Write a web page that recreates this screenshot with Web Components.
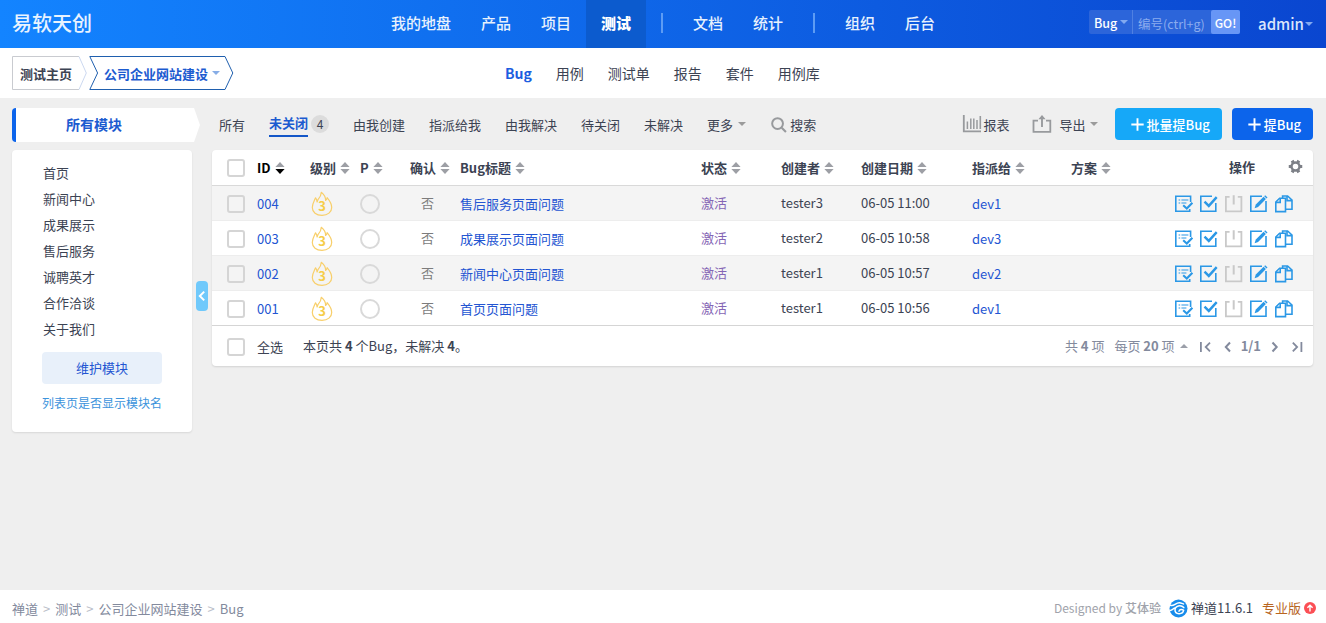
<!DOCTYPE html>
<html lang="zh-CN">
<head>
<meta charset="utf-8">
<title>Bug</title>
<style>
  body {
    margin: 0;
    height: 623px;
    display: flex;
    flex-direction: column;
    background: #efefef;
    color: #3c4353;
    font: 13px/20px "Noto Sans CJK SC", sans-serif;
    overflow: hidden;
  }

  main {
    flex: 1;
    display: flex;
    align-items: flex-start;
    padding: 10px 13px 0 12px;
  }
</style>
</head>
<body>
<top-bar></top-bar>
<sub-bar></sub-bar>
<main>
  <module-side>
    <span>首页</span>
    <span>新闻中心</span>
    <span>成果展示</span>
    <span>售后服务</span>
    <span>诚聘英才</span>
    <span>合作洽谈</span>
    <span>关于我们</span>
  </module-side>
  <side-toggle></side-toggle>
  <bug-panel></bug-panel>
</main>
<page-footer></page-footer>

<script>
const define = (name, html, setup) => {
  const template = document.createElement('template');
  template.innerHTML = html;
  customElements.define(name, class extends HTMLElement {
    constructor() {
      super();
      this.attachShadow({ mode: 'open' });
      this.shadowRoot.appendChild(template.content.cloneNode(true));
    }

    connectedCallback() {
      if (setup) setup(this, this.shadowRoot);
    }
  });
};

// Stroke icons on a 20x20 grid
const icons = {
  confirm: '<path d="M16.600 8V2.300H1.800V17.300H15.700V15"/><path d="M4.600 6h1.600M7.400 6h7M4.600 9h1.600M7.400 9h5" stroke-width="1.200"/><path d="M9.200 11.300l3.600 3.300 5.600-5.800" stroke-width="2.100"/>',
  resolve: '<path d="M13 2.300H1.800V17.300H16.800V9"/><path d="M5.500 7.600l4.300 4.300 7.900-8.800" stroke-width="2.400"/>',
  close: '<path d="M5.600 2.800H1.900V17.400H17.400V2.800H13.800" stroke-width="1.800"/><path d="M9.700 1.200V10.500" stroke-width="2"/>',
  edit: '<path d="M13 2.300H1.800V17.300H17V7"/><path d="M5.600 14.200l1.200-3.600 7.800-7.800 2.300 2.300-7.800 7.800z" fill="currentColor" stroke="none"/><path d="M16.200 1.200l2.300 2.300-1 1.100-2.300-2.300z" fill="currentColor" stroke="none"/>',
  copy: '<path d="M1.800 8L5.600 4.300H11.500V17.600H1.800z"/><path d="M2 8.400h4.200V4.400"/><path d="M8.600 4V2H13.600l4.400 4V15.200h-6.200M13 2.400v4.200h4.600"/>',
  search: '<circle cx="8.400" cy="8.400" r="6" stroke-width="2.200"/><path d="M13 13l4.700 4.700" stroke-width="2.400"/>',
  chart: '<path d="M1.800 1V17.400H19" stroke-width="1.800"/><path d="M5.400 7.500v7.500M8.800 4.400v10.600M11.800 4.400v10.600M15 6v9" stroke-width="1.500"/><path d="M18.300 2v13" stroke-width="1.600"/>',
  share: '<path d="M6 6.600H1.500V17.800H18.300V6.600H14" stroke-width="1.800"/><path d="M10 2.200V13" stroke-width="1.900"/><path d="M6.400 5.200L10 1l3.600 4.200z" fill="currentColor" stroke="none"/>',
  plus: '<path d="M10 3.500v13M3.500 10h13" stroke-width="2"/>',
  left: '<path d="M12 5.500L7.800 10l4.200 4.500" stroke-width="2"/>',
  right: '<path d="M8.500 5.500L12.700 10l-4.200 4.500" stroke-width="2"/>',
  first: '<path d="M5.900 5v10M15 5.700L10.700 10l4.300 4.300" stroke-width="1.800"/>',
  last: '<path d="M14.400 5v10M5.800 5.700l4.300 4.300-4.300 4.300" stroke-width="1.800"/>',
  gear: '<circle cx="10" cy="10" r="5.300" stroke-width="3.200"/><path d="M16 10h3M13 15.200l1.500 2.600M7 15.200l-1.500 2.600M4 10H1M7 4.800L5.500 2.200M13 4.800l1.500-2.600" stroke-width="4.200"/>'
};

define('zt-icon', `
  <style>
    :host { display: inline-flex; flex: none; width: 20px; height: 20px; }
    svg { width: 100%; height: 100%; fill: none; stroke: currentColor; stroke-width: 1.6; }
  </style>
  <svg viewBox="0 0 20 20"></svg>
`, (el, root) => {
  root.querySelector('svg').innerHTML = icons[el.getAttribute('name')];
});

define('zt-caret', `
  <style>
    :host {
      display: inline-block;
      flex: none;
      border: 4px solid transparent;
      border-top-color: currentColor;
      border-bottom: 0;
    }
    :host([up]) { border-top: 0; border-bottom: 4px solid currentColor; }
  </style>
`);

define('zt-check', `
  <style>
    :host {
      display: block;
      box-sizing: border-box;
      width: 18px;
      height: 18px;
      border: 2px solid #d5d5d5;
      border-radius: 3px;
    }
  </style>
`);

define('nav-item', `
  <style>
    :host { display: block; padding: 0 15px; font-weight: 500; color: #e7f1fd; }
    :host([active]) { background: #0c5bce; color: #fff; font-weight: 900; }
  </style>
  <slot></slot>
`);

define('top-bar', `
  <style>
    :host {
      display: flex;
      height: 48px;
      flex: none;
      background: linear-gradient(90deg, #1384ff 0%, #0a46d0 100%);
      color: #fff;
      line-height: 46px;
      justify-content: space-between;
    }
    .brand { width: 364px; padding-left: 12px; font-size: 20px; font-weight: 500; color: #e9f3ff; }
    nav { display: flex; font-size: 15px; }
    nav-item { height: 48px; }
    i { width: 2px; height: 20px; margin: 13px 15px; background: #5d9cf4; }
    .tools { flex: 1; display: flex; justify-content: flex-end; padding-right: 13px; }
    .search { display: flex; height: 24px; margin-top: 10px; line-height: 25px; border-radius: 2px; background: #2c65da; }
    .search > * { box-sizing: border-box; }
    .type { display: flex; align-items: center; justify-content: space-between; width: 44px; padding: 0 4px 0 5px; border-right: 1px solid #4f80e2; font-size: 12.5px; font-weight: 500; }
    .type zt-caret, .user zt-caret { color: #82a9f0; }
    .input { width: 78px; padding-left: 5px; color: #8bacee; font-size: 12.5px; line-height: 27px; white-space: nowrap; }
    .go { width: 29px; text-align: center; background: #6796f6; border-radius: 2px; font-size: 12px; font-weight: 500; line-height: 26px; }
    .user { display: flex; align-items: center; justify-content: space-between; width: 55px; margin-left: 18px; font-size: 15px; color: #dbe6fb; height: 48px; line-height: 48px; font-weight: 500; }
  </style>
  <div class="brand">易软天创</div>
  <nav>
    <nav-item>我的地盘</nav-item>
    <nav-item>产品</nav-item>
    <nav-item>项目</nav-item>
    <nav-item active>测试</nav-item>
    <i></i>
    <nav-item>文档</nav-item>
    <nav-item>统计</nav-item>
    <i></i>
    <nav-item>组织</nav-item>
    <nav-item>后台</nav-item>
  </nav>
  <div class="tools">
    <div class="search">
      <div class="type">Bug<zt-caret></zt-caret></div>
      <div class="input">编号(ctrl+g)</div>
      <div class="go">GO!</div>
    </div>
    <div class="user">admin<zt-caret></zt-caret></div>
  </div>
`);

define('sub-bar', `
  <style>
    :host { display: flex; flex: none; height: 50px; background: #fff; }
    .crumbs { display: flex; width: 481px; padding: 8px 0 0 12px; }
    .crumb { display: grid; height: 34px; line-height: 33px; font-weight: 700; }
    .crumb > * { grid-area: 1 / 1; }
    .crumb svg { fill: none; }
    .label { display: flex; align-items: center; gap: 4px; }
    .home .label { padding-left: 8px; }
    .current { margin-left: 2px; color: #1c5bd0; }
    .current .label { padding-left: 15px; }
    .current zt-caret { color: #87ade6; }
    nav { display: flex; font-size: 14px; line-height: 50px; gap: 24px; padding-left: 12px; }
    b { color: #1b5de0; }
  </style>
  <div class="crumbs">
    <div class="crumb home">
      <svg width="75" height="34"><path d="M67 .5H.5v33H67" stroke="#c9cbd0"/><path d="M67 .5l7.300 16.500L67 33.500" stroke="#cbd8f0"/></svg>
      <span class="label">测试主页</span>
    </div>
    <div class="crumb current">
      <svg width="145" height="34"><path d="M.8 .5H136l7.800 16.500-7.800 16.500H.8L8.600 17z" stroke="#1f5fae"/></svg>
      <span class="label">公司企业网站建设<zt-caret></zt-caret></span>
    </div>
  </div>
  <nav>
    <b>Bug</b>
    <span>用例</span>
    <span>测试单</span>
    <span>报告</span>
    <span>套件</span>
    <span>用例库</span>
  </nav>
`);

define('module-side', `
  <style>
    :host { display: block; flex: none; width: 188px; }
    .title {
      box-sizing: border-box;
      height: 34px;
      padding-left: 50px;
      border-left: 4px solid #0c64eb;
      border-radius: 4px 0 0 4px;
      background: #fff;
      clip-path: polygon(0 0, 182px 0, 188px 50%, 182px 100%, 0 100%);
      color: #1c5bd0;
      font-size: 14px;
      font-weight: 700;
      line-height: 33px;
    }
    .card {
      box-sizing: border-box;
      width: 180px;
      height: 282px;
      margin-top: 8px;
      padding: 10px 30px;
      background: #fff;
      border-radius: 4px;
      box-shadow: 0 1px 2px rgba(0, 0, 0, .1);
    }
    .list { padding-left: 1px; }
    ::slotted(span) { display: block; height: 26px; line-height: 25px; }
    .btn { height: 32px; margin-top: 10px; border-radius: 4px; background: #e8f0fa; color: #2355d2; line-height: 31px; text-align: center; }
    .hint { margin-top: 9px; color: #3b93dc; font-size: 12px; white-space: nowrap; }
  </style>
  <div class="title">所有模块</div>
  <div class="card">
    <div class="list"><slot></slot></div>
    <div class="btn">维护模块</div>
    <div class="hint">列表页是否显示模块名</div>
  </div>
`);

define('side-toggle', `
  <style>
    :host {
      display: flex;
      flex: none;
      align-items: center;
      justify-content: center;
      width: 12px;
      height: 30px;
      margin: 173px 4px 0 -4px;
      border-radius: 4px;
      background: #70c9fb;
      color: #fff;
    }
    svg { fill: none; stroke: currentColor; stroke-width: 2; }
  </style>
  <svg width="12" height="12"><path d="M8.200 1.600L3.800 6l4.400 4.400"/></svg>
`);

define('filter-bar', `
  <style>
    :host { display: flex; height: 32px; line-height: 31px; padding-left: 7px; }
    .tabs { display: flex; flex: 1; gap: 24px; }
    .tabs > * { display: flex; align-items: center; }
    .active b { box-sizing: border-box; height: 29px; line-height: 30px; border-bottom: 2px solid #1457c8; color: #1c5bd0; }
    .tabs .active { align-items: flex-start; gap: 3px; }
    .badge { width: 18px; height: 18px; margin-top: 7px; border-radius: 9px; background: #dcdcdc; line-height: 18px; text-align: center; font-size: 12px; }
    .more { gap: 5px; }
    zt-caret { color: #9b9b9b; }
    zt-icon { color: #989a9d; }
    .find { gap: 2px; }
    .find zt-icon { width: 18px; height: 18px; margin-top: 1px; }
    .right { display: flex; align-items: center; }
    .report, .export { display: flex; align-items: center; }
    .report { margin-right: 23px; gap: 1px; }
    .export { margin-right: 17px; }
    .export span { margin: 0 4px 0 7px; }
    .btn { display: flex; align-items: center; border-radius: 4px; padding: 0 12px 0 13px; height: 32px; color: #fff; font-weight: 500; background: #16a8f8; }
    .btn zt-icon { width: 19px; height: 19px; color: #fff; }
    .primary { background: #0c64eb; margin-left: 10px; }
  </style>
  <div class="tabs">
    <span>所有</span>
    <div class="active"><b>未关闭</b><span class="badge">4</span></div>
    <span>由我创建</span>
    <span>指派给我</span>
    <span>由我解决</span>
    <span>待关闭</span>
    <span>未解决</span>
    <div class="more">更多<zt-caret></zt-caret></div>
    <div class="find"><zt-icon name="search"></zt-icon><span>搜索</span></div>
  </div>
  <div class="right">
    <div class="report"><zt-icon name="chart"></zt-icon>报表</div>
    <div class="export"><zt-icon name="share"></zt-icon><span>导出</span><zt-caret></zt-caret></div>
    <div class="btn"><zt-icon name="plus"></zt-icon>批量提Bug</div>
    <div class="btn primary"><zt-icon name="plus"></zt-icon>提Bug</div>
  </div>
`);

const columns = `
  :host {
    display: grid;
    grid-template-columns: 45px 53px 50px 50px 50px 241px 80px 80px 111px 99px 103px 1fr;
    align-items: center;
  }
  zt-check { margin-left: 15px; }
`;

define('sort-head', `
  <style>
    :host { display: flex; align-items: center; gap: 4px; font-weight: 700; line-height: 18px; white-space: nowrap; }
    svg { flex: none; fill: #9d9fa5; }
    :host([active]) { color: #000; }
    :host([active]) .down { fill: #000; }
  </style>
  <slot></slot>
  <svg width="10" height="12"><path d="M5 0l4.600 5H.4z"/><path class="down" d="M5 12L.4 7h9.200z"/></svg>
`);

define('bug-head', `
  <style>
    ${columns}
    :host { height: 35px; border-bottom: 1px solid #d9d9d9; }
    .ops { display: flex; align-items: center; padding: 0 0 2px 55px; font-weight: 700; }
    zt-icon { width: 15px; height: 15px; margin-left: 33px; color: #7d8087; }
  </style>
  <zt-check></zt-check>
  <sort-head active>ID</sort-head>
  <sort-head>级别</sort-head>
  <sort-head>P</sort-head>
  <sort-head>确认</sort-head>
  <sort-head>Bug标题</sort-head>
  <sort-head>状态</sort-head>
  <sort-head>创建者</sort-head>
  <sort-head>创建日期</sort-head>
  <sort-head>指派给</sort-head>
  <sort-head>方案</sort-head>
  <div class="ops">操作<zt-icon name="gear"></zt-icon></div>
`);

define('bug-row', `
  <style>
    ${columns}
    :host { height: 34px; border-bottom: 1px solid #ededed; }
    :host(:nth-of-type(odd)) { background: #f4f4f4; }
    :host(:last-of-type) { border-bottom-color: #d5d5d5; }
    zt-check, .pri, .ops { margin-top: 2px; }
    a { color: #2355d2; padding-top: 1px; }
    .fire { display: grid; width: 22px; height: 26px; margin-left: 1px; padding-top: 1px; }
    .fire > * { grid-area: 1 / 1; }
    .fire svg { fill: none; stroke: #f8cf6a; stroke-width: 1.2; stroke-linejoin: round; }
    .fire b { padding-top: 5px; color: #f6cd4a; font-size: 13px; text-align: center; }
    .pri { box-sizing: border-box; width: 20px; height: 20px; border: 2px solid #d9d9d9; border-radius: 50%; }
    .sure { padding-left: 11px; color: #7c7c7c; }
    .status { color: #8565b5; }
    .ops { display: flex; gap: 5px; color: #2b98e6; }
    .off { color: #c9c9c9; }
  </style>
  <zt-check></zt-check>
  <a class="id"></a>
  <div class="fire">
    <svg width="22" height="26"><path d="M7 8.600C9 6.500 10.200 4 10.300 1.300c3 2.400 4.400 5 4.300 8.200 1-.8 1.400-1.600 1.500-2.800 3 3.600 4.600 6.500 4.600 9.700 0 4.800-4 7.900-9.700 7.900S1.300 21.300 1.300 16.500C1.300 12.800 3 10.500 4.600 6.800 5.700 8.300 6 9.500 6.100 11z"/></svg>
    <b>3</b>
  </div>
  <div class="pri"></div>
  <span class="sure">否</span>
  <a class="title"></a>
  <span class="status">激活</span>
  <span class="creator"></span>
  <span class="date"></span>
  <a class="assigned"></a>
  <span></span>
  <div class="ops">
    <zt-icon name="confirm"></zt-icon>
    <zt-icon name="resolve"></zt-icon>
    <zt-icon name="close" class="off"></zt-icon>
    <zt-icon name="edit"></zt-icon>
    <zt-icon name="copy"></zt-icon>
  </div>
`, (el, root) => {
  ['id', 'title', 'creator', 'date', 'assigned'].forEach((key) => {
    root.querySelector('.' + key).textContent = el.bug[key];
  });
});

define('table-footer', `
  <style>
    :host { display: flex; align-items: center; box-sizing: border-box; height: 40px; padding: 0 6px 0 15px; }
    zt-check { margin-top: 2px; }
    .all { margin: 2px 20px 0 12px; }
    .sum { flex: 1; }
    .pager { display: flex; align-items: center; color: #838a9d; }
    .per { margin: 0 5px 0 10px; }
    zt-caret { margin-right: 7px; color: #9b9fa9; }
    zt-icon { margin-top: 1px; }
    .page { margin: 0 3px; }
    zt-icon + zt-icon { margin-left: 3px; }
  </style>
  <zt-check></zt-check>
  <span class="all">全选</span>
  <span class="sum">本页共 <b>4</b> 个Bug，未解决 <b>4</b>。</span>
  <div class="pager">
    <span>共 <b>4</b> 项</span>
    <span class="per">每页 <b>20</b> 项</span>
    <zt-caret up></zt-caret>
    <zt-icon name="first"></zt-icon>
    <zt-icon name="left"></zt-icon>
    <b class="page">1/1</b>
    <zt-icon name="right"></zt-icon>
    <zt-icon name="last"></zt-icon>
  </div>
`);

const bugs = [
  { id: '004', title: '售后服务页面问题', creator: 'tester3', date: '06-05 11:00', assigned: 'dev1' },
  { id: '003', title: '成果展示页面问题', creator: 'tester2', date: '06-05 10:58', assigned: 'dev3' },
  { id: '002', title: '新闻中心页面问题', creator: 'tester1', date: '06-05 10:57', assigned: 'dev2' },
  { id: '001', title: '首页页面问题', creator: 'tester1', date: '06-05 10:56', assigned: 'dev1' }
];

define('bug-panel', `
  <style>
    :host { display: block; flex: 1; }
    .card { margin-top: 10px; background: #fff; border-radius: 4px; box-shadow: 0 1px 2px rgba(0, 0, 0, .12); overflow: hidden; }
  </style>
  <filter-bar></filter-bar>
  <div class="card">
    <bug-head></bug-head>
    <div class="rows"></div>
    <table-footer></table-footer>
  </div>
`, (el, root) => {
  const rows = root.querySelector('.rows');
  bugs.forEach((bug) => {
    const row = document.createElement('bug-row');
    row.bug = bug;
    rows.appendChild(row);
  });
});

define('page-footer', `
  <style>
    :host { display: flex; flex: none; align-items: center; justify-content: space-between; box-sizing: border-box; height: 33px; padding: 0 10px 0 12px; background: #fff; }
    .path { display: flex; gap: 5px; padding-top: 4px; color: #838a9d; }
    .path i { font-style: normal; color: #b9bdc8; font-size: 13px; }
    .info { display: flex; align-items: center; padding-top: 3px; }
    .by { margin-right: 8px; color: #a0a3ab; font-size: 12px; }
    .by span { font-weight: 500; }
    .ver { margin: 0 9px 0 3px; }
    .pro { margin-right: 3px; color: #b8651f; }
    svg { display: block; }
  </style>
  <div class="path"><span>禅道</span><i>&gt;</i><span>测试</span><i>&gt;</i><span>公司企业网站建设</span><i>&gt;</i><span>Bug</span></div>
  <div class="info">
    <span class="by">Designed by <span>艾体验</span></span>
    <svg width="19" height="19" viewBox="0 0 19 19">
      <circle cx="9.500" cy="9.500" r="9" fill="#188ceb"/>
      <path d="M1.200 6.200C4.500 8.200 6.500 3.600 10.500 3.800c1.800.1 2.700 1 4 1.100M14.800 8.600C12 5.600 6 6.600 6 11c0 4.600 7.600 5 8.600.4-1.600-1.600-4.200-1.200-4.600.8M1.400 11.400c1.600-.2 2.800-1.200 4-2.400" fill="none" stroke="#fff" stroke-width="1.500" stroke-linecap="round"/>
    </svg>
    <span class="ver">禅道11.6.1</span>
    <span class="pro">专业版</span>
    <svg width="12" height="12"><circle cx="6" cy="6" r="6" fill="#fb4f55"/><path d="M6 9.500V3.500M3.400 5.800L6 3.200l2.600 2.600" fill="none" stroke="#fff" stroke-width="1.400"/></svg>
  </div>
`);
</script>
</body>
</html>
